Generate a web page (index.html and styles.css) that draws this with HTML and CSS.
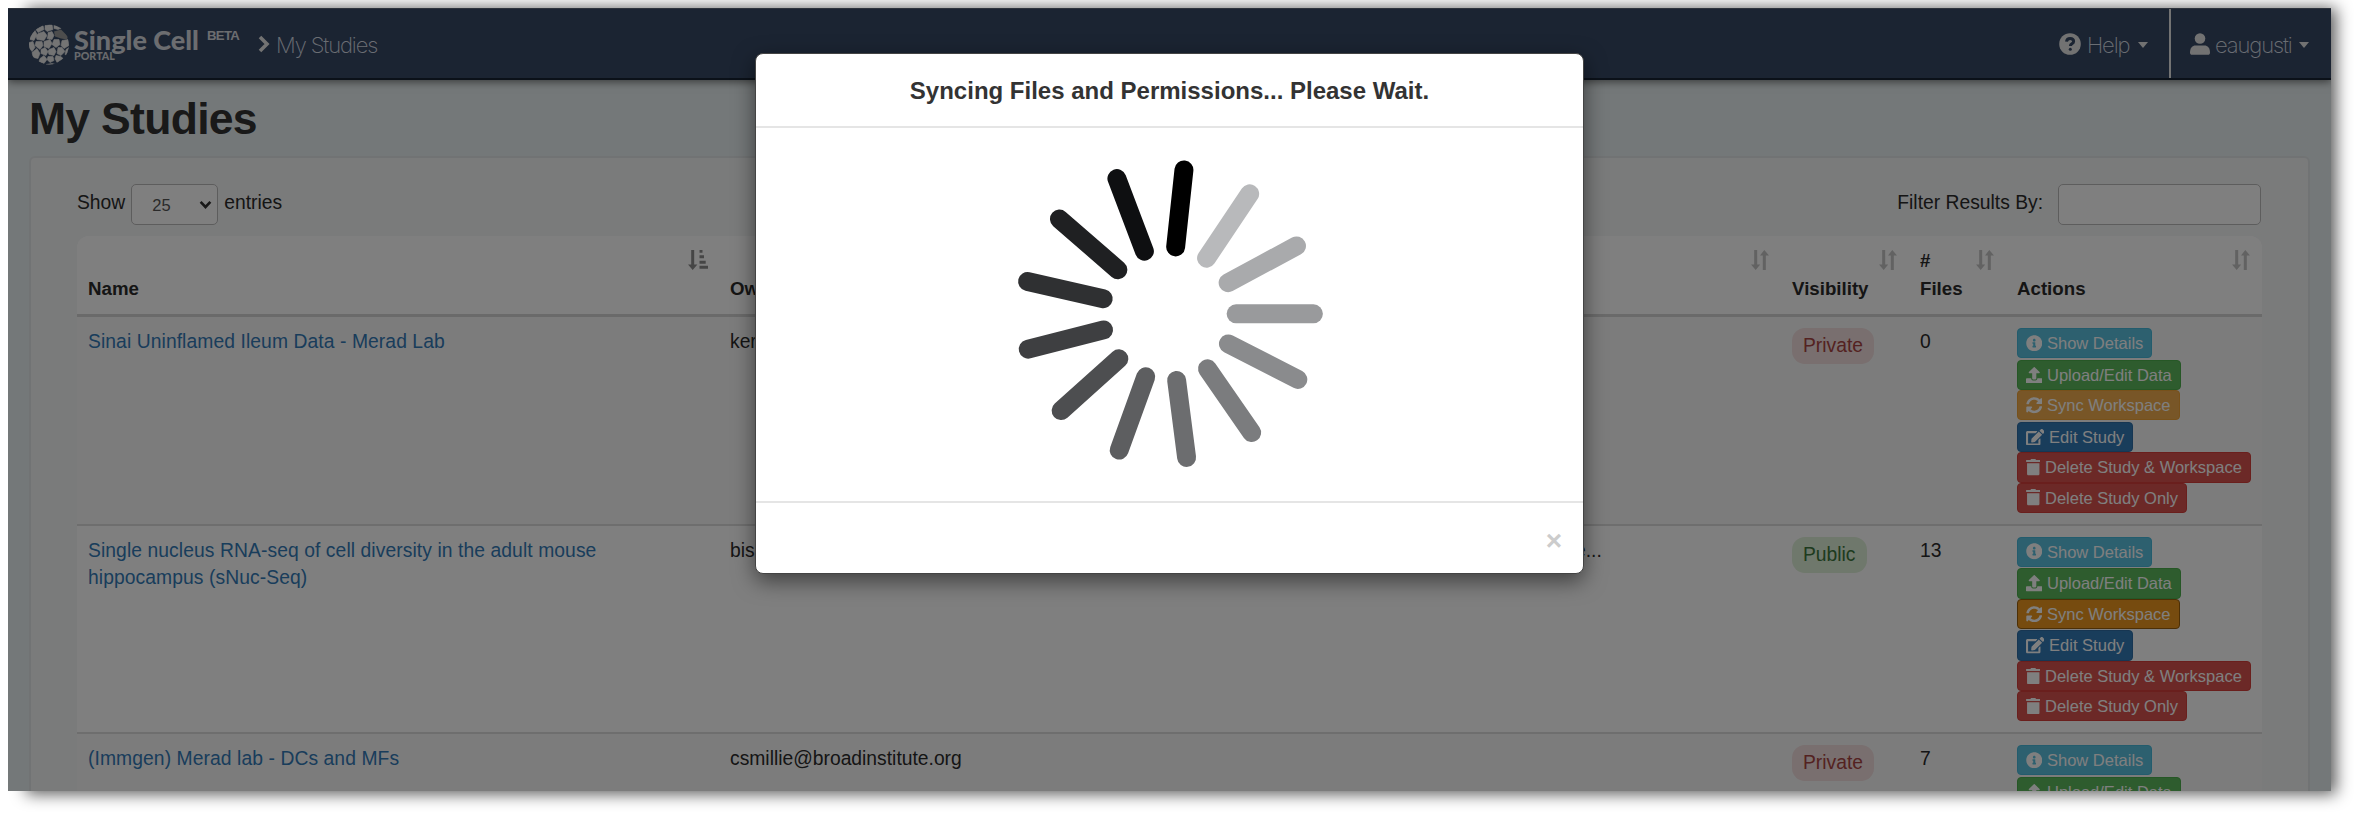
FILE: index.html
```html
<!DOCTYPE html>
<html lang="en">
<head>
<meta charset="utf-8">
<title>My Studies</title>
<link rel="stylesheet" href="styles.css">
</head>
<body>
<svg width="0" height="0" class="defs">
  <defs>
    <symbol id="i-info" viewBox="0 0 512 512"><path d="M256 8C119 8 8 119 8 256s111 248 248 248 248-111 248-248S393 8 256 8zm0 110c23.200 0 42 18.800 42 42s-18.800 42-42 42-42-18.800-42-42 18.800-42 42-42zm56 254c0 6.600-5.400 12-12 12h-88c-6.600 0-12-5.400-12-12v-24c0-6.600 5.400-12 12-12h12v-64h-12c-6.600 0-12-5.400-12-12v-24c0-6.600 5.400-12 12-12h64c6.600 0 12 5.400 12 12v100h12c6.600 0 12 5.400 12 12z"/></symbol>
    <symbol id="i-upload" viewBox="0 0 512 512"><path d="M296 384h-80c-13 0-24-11-24-24V192h-88c-18 0-27-21-14-34L242 6c8-8 20-8 28 0l152 152c13 13 4 34-14 34h-88v168c0 13-11 24-24 24zm216-8v112c0 13-11 24-24 24H24c-13 0-24-11-24-24V376c0-13 11-24 24-24h136v8c0 31 25 56 56 56h80c31 0 56-25 56-56v-8h136c13 0 24 11 24 24z"/></symbol>
    <symbol id="i-sync" viewBox="0 0 512 512"><path d="M371 133c-32-30-73-46-116-46-78 0-145 53-163 127-1 5-6 9-12 9H24c-8 0-13-7-12-14C33 94 134 8 256 8c66 0 126 26 171 69l35-35c15-15 41-4 41 17v134c0 13-11 24-24 24H345c-21 0-32-26-17-41l43-43zM33 296h134c21 0 32 26 17 41l-43 42c32 30 73 46 116 46 78 0 145-53 163-127 1-5 6-9 12-9h56c7 0 13 7 12 14-21 115-122 201-244 201-66 0-126-26-171-69l-35 35c-15 15-41 5-41-17V320c0-13 11-24 24-24z"/></symbol>
    <symbol id="i-edit" viewBox="0 0 576 512"><path d="M402.600 83.200l90.200 90.200c3.800 3.800 3.800 10 0 13.800L274.400 405.600l-92.800 10.300c-12.400 1.400-22.900-9.100-21.500-21.500l10.300-92.800L388.800 83.200c3.800-3.800 10-3.800 13.800 0zm162-22.900l-48.800-48.800c-15.200-15.200-39.900-15.200-55.200 0l-35.400 35.400c-3.800 3.800-3.800 10 0 13.800l90.200 90.200c3.800 3.800 10 3.800 13.800 0l35.400-35.400c15.200-15.300 15.200-40 0-55.200zM384 346.200V448H64V128h229.800c3.200 0 6.200-1.300 8.500-3.500l40-40c7.600-7.600 2.200-20.500-8.500-20.500H48C21.500 64 0 85.500 0 112v352c0 26.500 21.500 48 48 48h352c26.500 0 48-21.500 48-48V306.200c0-10.700-12.900-16-20.500-8.500l-40 40c-2.200 2.300-3.500 5.300-3.500 8.500z"/></symbol>
    <symbol id="i-trash" viewBox="0 0 448 512"><path d="M432 32H312l-9-19a24 24 0 0 0-22-13H167c-9 0-18 5-21 13l-10 19H16C7 32 0 39 0 48v32c0 9 7 16 16 16h416c9 0 16-7 16-16V48c0-9-7-16-16-16zM32 128h384v336c0 27-21 48-48 48H80c-27 0-48-21-48-48z"/></symbol>
    <symbol id="i-sort" viewBox="0 0 20 20"><path d="M4.200 0h3v14.500h3L5.700 20 1 14.500h3.200zM12.800 20h3V5.500h3.200L14.300 0 10 5.500h2.800z"/></symbol>
    <symbol id="i-sort-asc" viewBox="0 0 20 20"><path d="M3.200 0h3v14.500h3.200L4.700 20 0 14.500h3.200zM11.500 0h3v2.800h-3zM11.500 5.300h4.500v3h-4.500zM11.500 10.700h6.200v3h-6.200zM11.500 15.800H20v3h-8.500z"/></symbol>
  </defs>
</svg>
<div class="window">
  <nav class="navbar">
    <div class="brand">
      <svg class="cells" viewBox="0 0 40 40">
        <defs><clipPath id="ball"><circle cx="20" cy="20" r="20"/></clipPath></defs>
        <g clip-path="url(#ball)">
          <g class="cell">
            <path d="M7 5l7-4 1 4-6 3zM16 1l7-1 1 5-6 2-2-2zM25 0l9 3-5 2-4-1zM1 12l5-6 2 4-3 6-4-1zM9 9l6-2 3 4-3 5-7-1-1-3zM19 8l4-1 2 4-2 4-5-1 1-3zM0 18l4-1 2 6-3 4-3-4zM7 17l6 0 1 4-3 4-5-4zM15 17l6-2 2 4-3 5-5-2zM25 15l5 0 1 5-4 3-4-3zM33 16l6-1 1 6-5 3-3-3zM3 28l5-4 3 5-2 5-5-1zM12 25l4-2 3 4-2 4-5-2zM20 25l5-2 2 4-2 4-5-1-1-3zM29 23l4 0 3 4-4 4-4-2zM37 25l3-2-1 8-3-1zM11 34l4-3 3 4-3 4-5-2zM19 32l5 0 1 4-4 2-3-3zM27 31l5 1 2 2-6 4-2-4zM17 40l6-1 4 1-2 1z"/>
          </g>
          <path class="cell-dim" d="M25 7l7-2 7 7-1 3-6-1-6-2z"/>
        </g>
      </svg>
      <div class="wordmark"><span class="single">Single Cell</span><span class="portal">PORTAL</span></div>
      <span class="beta">BETA</span>
    </div>
    <div class="crumb">
      <svg class="chev" viewBox="0 0 12 18"><path d="M2 2l7 7-7 7"/></svg>
      <span class="thin crumb-text">My Studies</span>
    </div>
    <div class="nav-right">
      <div class="nav-item help">
        <svg class="help-icon" viewBox="0 0 22 22"><circle cx="11" cy="11" r="10.800"/><path d="M7.500 8.600c.3-2 1.700-3.200 3.600-3.200 2 0 3.500 1.200 3.500 3 0 2.400-3.200 2.400-3.200 4.500" class="q"/><circle cx="11.300" cy="16.200" r="1.500" class="qd"/></svg>
        <span class="thin help-text">Help</span><i class="caret"></i>
      </div>
      <div class="nav-item user">
        <svg class="user-icon" viewBox="0 0 20 22"><circle cx="10" cy="5.500" r="5.300"/><path d="M0 19.500c0-4.500 2.500-7 5.500-7h9c3 0 5.500 2.500 5.500 7 0 1.500-.8 2.300-2 2.300H2c-1.200 0-2-.8-2-2.300z"/></svg>
        <span class="thin user-text">eaugusti</span><i class="caret"></i>
      </div>
    </div>
  </nav>
  <h1>My Studies</h1>
  <section class="well">
    <div class="controls">
      <label class="show">Show <span class="select"><span>25</span><svg viewBox="0 0 12 8"><path d="M1.500 1.500L6 6.300l4.500-4.800"/></svg></span> entries</label>
      <label class="filter"><span>Filter Results By:</span><input type="text"></label>
    </div>
    <div class="table">
      <div class="row head">
        <div class="cell-h"><span>Name</span><svg class="sort active"><use href="#i-sort-asc"/></svg></div>
        <div class="cell-h"><span>Owner</span></div>
        <div class="cell-h"><svg class="sort"><use href="#i-sort"/></svg></div>
        <div class="cell-h"><span>Visibility</span><svg class="sort"><use href="#i-sort"/></svg></div>
        <div class="cell-h"><span>#<br>Files</span><svg class="sort"><use href="#i-sort"/></svg></div>
        <div class="cell-h"><span>Actions</span><svg class="sort"><use href="#i-sort"/></svg></div>
      </div>
      <div class="row odd">
        <div class="td"><a>Sinai Uninflamed Ileum Data - Merad Lab</a></div>
        <div class="td">ker@broadinstitute.org</div>
        <div class="td"></div>
        <div class="td"><span class="badge private">Private</span></div>
        <div class="td">0</div>
        <div class="td actions">
          <span class="btn info gap"><svg><use href="#i-info"/></svg>Show Details</span>
          <span class="btn success"><svg><use href="#i-upload"/></svg>Upload/Edit Data</span>
          <span class="btn warning gap"><svg><use href="#i-sync"/></svg>Sync Workspace</span>
          <span class="btn primary"><svg class="wide"><use href="#i-edit"/></svg>Edit Study</span>
          <span class="btn danger"><svg class="slim"><use href="#i-trash"/></svg>Delete Study &amp; Workspace</span>
          <span class="btn danger"><svg class="slim"><use href="#i-trash"/></svg>Delete Study Only</span>
        </div>
      </div>
      <div class="row">
        <div class="td"><a>Single nucleus RNA-seq of cell diversity in the adult mouse<br>hippocampus (sNuc-Seq)</a></div>
        <div class="td">bis@broadinstitute.org</div>
        <div class="td desc">e...</div>
        <div class="td"><span class="badge public">Public</span></div>
        <div class="td">13</div>
        <div class="td actions">
          <span class="btn info gap"><svg><use href="#i-info"/></svg>Show Details</span>
          <span class="btn success"><svg><use href="#i-upload"/></svg>Upload/Edit Data</span>
          <span class="btn warning pressed gap"><svg><use href="#i-sync"/></svg>Sync Workspace</span>
          <span class="btn primary"><svg class="wide"><use href="#i-edit"/></svg>Edit Study</span>
          <span class="btn danger"><svg class="slim"><use href="#i-trash"/></svg>Delete Study &amp; Workspace</span>
          <span class="btn danger"><svg class="slim"><use href="#i-trash"/></svg>Delete Study Only</span>
        </div>
      </div>
      <div class="row odd">
        <div class="td"><a>(Immgen) Merad lab - DCs and MFs</a></div>
        <div class="td">csmillie@broadinstitute.org</div>
        <div class="td"></div>
        <div class="td"><span class="badge private">Private</span></div>
        <div class="td">7</div>
        <div class="td actions">
          <span class="btn info gap"><svg><use href="#i-info"/></svg>Show Details</span>
          <span class="btn success"><svg><use href="#i-upload"/></svg>Upload/Edit Data</span>
        </div>
      </div>
    </div>
  </section>
  <div class="backdrop">
    <div class="modal">
      <header><h4>Syncing Files and Permissions... Please Wait.</h4></header>
      <div class="modal-body">
        <svg class="spinner" viewBox="0 0 1024 1024">
          <path stroke="#000" d="M554 90L529 322"/>
          <path stroke="#b8b9bb" d="M752 162L622 356"/>
          <path stroke="#a9aaac" d="M893 319L687 430"/>
          <path stroke="#999a9c" d="M944 523.500H711"/>
          <path stroke="#8a8b8d" d="M897 721L688 614"/>
          <path stroke="#7b7c7e" d="M758 881L625 689"/>
          <path stroke="#6c6d6f" d="M562 956L532 724"/>
          <path stroke="#5d5e60" d="M359 934L439 713"/>
          <path stroke="#4d4e50" d="M184 815L358 659"/>
          <path stroke="#3e3f41" d="M85 630L312 572"/>
          <path stroke="#2f3032" d="M83 426L311 478"/>
          <path stroke="#1f2022" d="M179 238L355 391"/>
          <path stroke="#0e0f11" d="M352 116L435 335"/>
        </svg>
      </div>
      <footer><span class="close">×</span></footer>
    </div>
  </div>
</div>
</body>
</html>
```

FILE: styles.css
```css
* { box-sizing: border-box; }
body {
  display: flow-root;
  margin: 0;
  width: 2354px;
  height: 816px;
  padding: 8px;
  overflow: hidden;
  background: #fff;
  font: 19.3px/27.7px "Liberation Sans", Arial, sans-serif;
  color: #2b2b2b;
}
.defs { position: absolute; }
.window {
  position: relative;
  width: 2323px;
  height: 783px;
  overflow: hidden;
  background: #e8f0f2;
}
/* soft shadow cast to the lower right of the window */
body::before {
  content: "";
  position: absolute;
  z-index: -1;
  left: 26px;
  top: 8px;
  width: 2310px;
  height: 786px;
  background: rgba(0, 0, 0, .65);
  filter: blur(8px);
}
.navbar {
  display: flex;
  align-items: center;
  height: 72px;
  padding-left: 21px;
  background: #364864;
  border-bottom: 2px solid #172233;
  border-top: 1px solid #5b6778;
  box-shadow: 0 2px 8px rgba(0, 0, 0, .5);
  color: #fff;
  position: relative;
}
.brand { display: flex; align-items: flex-start; height: 42px; width: 229px; }
.cells { width: 40px; height: 41px; margin-top: 1px; }
.cell { fill: #e8e8e8; stroke: #e8e8e8; stroke-width: .6; stroke-linejoin: round; }
.cell-dim { fill: #9a9a9a; }
.wordmark { display: flex; flex-direction: column; margin-left: 5px; }
.single { font: 900 27px/25px Lato, sans-serif; margin-top: 4px; color: #d8dbe0; width: 126px; white-space: nowrap; }
.portal { font: 900 10.7px/11px Lato, sans-serif; margin-top: -2px; color: #d0d3d8; }
.beta { font: bold 13.2px/14px "Liberation Sans", sans-serif; margin: 6px 0 0 7px; letter-spacing: -.7px; color: #d8dbe0; }
.crumb { display: flex; align-items: center; }
.chev { width: 12px; height: 18px; }
.chev path { fill: none; stroke: #e6e6e6; stroke-width: 3.6; }
.thin { font: 200 22px/28px Inter, "Liberation Sans", sans-serif; color: #d6dde6; letter-spacing: -1.1px; white-space: nowrap; }
.crumb-text { margin-left: 6px; padding-top: 2px; }
.nav-right { display: flex; margin-left: auto; height: 69px; }
.nav-item { display: flex; align-items: center; }
.help { width: 110px; }
.user { width: 162px; border-left: 2px solid #e6e6e6; padding-left: 19px; }
.help-icon, .user-icon { fill: #e4e4e4; width: 22px; height: 22px; margin-top: 1px; }
.user-icon { width: 20px; }
.help-icon .q { fill: none; stroke: #364864; stroke-width: 3; }
.help-icon .qd { fill: #364864; }
.help-text { margin-left: 6px; width: 41px; padding-top: 2px; }
.user-text { margin-left: 5px; width: 74px; padding-top: 2px; }
.caret { border: 5.500px solid transparent; border-top: 6px solid #e4e4e4; border-bottom: 0; margin: 3px 0 0 10px; }
h1 {
  margin: 0 0 0 21px;
  font: bold 44.5px/50px "Liberation Sans", Arial, sans-serif;
  letter-spacing: -.7px;
  padding-top: 14px;
  height: 76px;
  color: #333;
}
.well {
  margin: 0 21px 0 21px;
  height: 800px;
  padding: 26px 46px 0 46px;
  background: #f5f6f7;
  border: 2px solid #e3e7e8;
  border-radius: 6px;
}
.controls { display: flex; justify-content: space-between; height: 52px; }
.show, .filter { display: flex; align-items: flex-start; line-height: 38px; }
.filter { gap: 15px; margin-right: 1px; }
.select {
  display: flex;
  align-items: center;
  justify-content: space-between;
  width: 87px;
  height: 41px;
  margin: 0 6px 0 6px;
  padding: 0 5px 0 20px;
  background: #fff;
  border: 1.500px solid #bbb;
  border-radius: 5px;
  font-size: 16.500px;
  color: #555;
}
.select svg { width: 13px; height: 9px; }
.select path { fill: none; stroke: #333; stroke-width: 2.4; }
.filter input { width: 203px; height: 41px; background: #fff; border: 1.500px solid #bbb; border-radius: 5px; padding: 0; }
.table { width: 2185px; border-radius: 12px 12px 0 0; overflow: hidden; background: #fff; }
.row { display: grid; grid-template-columns: 642px 846px 216px 128px 97px 256px; height: 208.500px; border-bottom: 2px solid #ddd; }
.row.odd { background: #f9f9f9; }
.row.head { height: 81px; border-bottom: 3px solid #d4d4d4; background: #fff; }
.cell-h { display: flex; justify-content: space-between; padding: 14px 11px 10px; font-weight: bold; font-size: 18.700px; }
.cell-h span { align-self: flex-start; margin-top: auto; margin-bottom: 9px; white-space: nowrap; }
.cell-h span:has(br) { margin-top: -3px; }
.sort { width: 20px; height: 20px; fill: #c4c4c4; margin-left: auto; }
.sort.active { fill: #8c8c8c; }
.td { padding: 11px; }
.td a { color: #337ab7; letter-spacing: .08px; }
.desc { padding-left: 10px; }
.badge { display: inline-block; padding: 4px 11px; border-radius: 13px; line-height: 28px; }
.private { background: #f2dede; color: #a94442; }
.public { background: #dff0d8; color: #3c763d; }
.actions { display: flex; flex-direction: column; align-items: flex-start; }
.btn {
  display: flex;
  align-items: center;
  flex: none;
  height: 30.400px;
  padding: 0 8px 0 7.500px;
  border-radius: 4px;
  border: 1.500px solid;
  font-size: 16.500px;
  line-height: 28px;
  color: #fff;
  white-space: nowrap;
}
.btn.gap { margin-bottom: 1.300px; }
.btn svg { width: 16.500px; height: 16.500px; margin-right: 5px; fill: #fff; flex: none; }
.btn svg.wide { width: 18.600px; }
.btn svg.slim { width: 14.500px; }
.info { background: #5bc0de; border-color: #46b8da; }
.success { background: #5cb85c; border-color: #4cae4c; }
.warning { background: #f0ad4e; border-color: #eea236; }
.warning.pressed { background: #ec971f; border-color: #985f0d; }
.primary { background: #337ab7; border-color: #2e6da4; }
.danger { background: #d9534f; border-color: #d43f3a; }
.backdrop { position: absolute; inset: 0; background: rgba(0, 0, 0, .5); padding: 45px 0 0 747px; }
.modal { width: 829px; height: 521px; background: #fff; border-radius: 8px; border: 1px solid #444; box-shadow: 0 7px 21px rgba(0, 0, 0, .5); display: flex; flex-direction: column; }
.modal header { height: 74px; border-bottom: 2px solid #e5e5e5; }
h4 { margin: 0; text-align: center; font: bold 24px/74px "Liberation Sans", sans-serif; color: #333; white-space: nowrap; }
.modal-body { height: 375px; padding: 12px 0 0 244px; border-bottom: 2px solid #e5e5e5; }
.spinner { width: 340px; height: 340px; }
.spinner path { stroke-width: 57; stroke-linecap: round; }
.close { display: block; text-align: right; padding: 24px 21px 0 0; font: bold 28px/28px "Liberation Sans", sans-serif; color: #ccc; }
```
